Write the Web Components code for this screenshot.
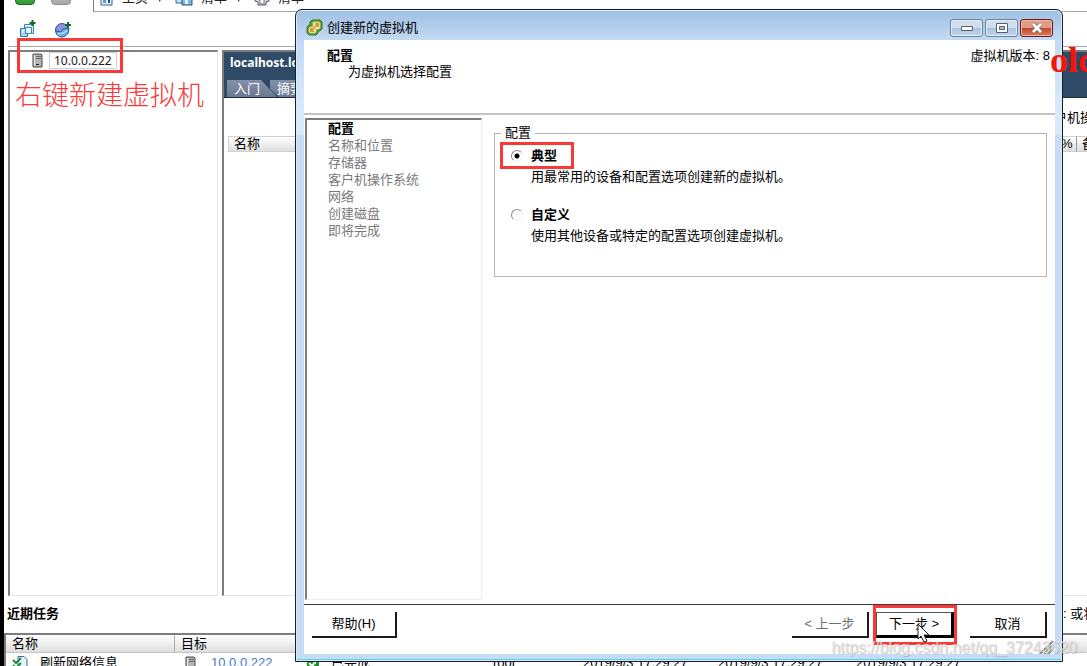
<!DOCTYPE html>
<html lang="zh-CN">
<head>
<meta charset="UTF-8">
<meta name="viewport" content="width=device-width, initial-scale=1.0">
<title>vSphere Client</title>
<style>
    :root {
        --font-ui: "Liberation Sans", "Noto Sans CJK SC", sans-serif;
        --font-tahoma: "Noto Sans", "Noto Sans CJK SC", sans-serif;
        --mark: #fb3838;
        --line: #a8a8a8;
        --edge: #7d7d7d;
        --navy: #2f4a66;
        --frame: #c6dcf5;
    }

    body {
        margin: 0;
        height: 100vh;
        overflow: hidden;
        position: relative;
        background: #fff;
        color: #000;
        font: 13px/16px var(--font-ui);
    }
</style>
</head>
<body>
    <vsphere-shell>
        <nav-bar slot="nav"></nav-bar>
        <tool-bar slot="tools"></tool-bar>
        <inventory-tree slot="tree"></inventory-tree>
        <host-panel slot="host"></host-panel>
        <task-list slot="tasks"></task-list>
    </vsphere-shell>

    <wizard-window>
        <span slot="title">创建新的虚拟机</span>
        <wizard-header slot="header">
            <span slot="heading">配置</span>
            <span slot="summary">为虚拟机选择配置</span>
            <span slot="version">虚拟机版本: 8</span>
        </wizard-header>
        <wizard-steps slot="steps"></wizard-steps>
        <config-options slot="page"></config-options>
        <wizard-footer slot="footer"></wizard-footer>
    </wizard-window>

    <page-notes></page-notes>

<script>
const serverIcon = `
    <svg width="11" height="15" viewBox="0 0 11 15" aria-hidden="true">
        <path d="M1 1h8l1 1v12H1z" fill="#b4b4b4" stroke="#4a4a4a"/>
        <path d="M2.500 2v11" stroke="#ededed"/>
        <path d="M4 3.500h5M4 5.500h5" stroke="#6c6c6c"/>
        <path d="M4 11.500h3" stroke="#222"/>
    </svg>`;

class VsphereShell extends HTMLElement {
    constructor() {
        super();
        this.attachShadow({ mode: 'open' });
    }

    connectedCallback() {
        this.shadowRoot.innerHTML = `
            <style>
                :host {
                    display: flex;
                    flex-direction: column;
                    height: 100%;
                    box-sizing: border-box;
                    border-left: 4px solid #000;
                    overflow: hidden;
                }

                .main {
                    flex: 1;
                    min-height: 0;
                    display: grid;
                    grid-template-columns: 210px 1fr;
                    gap: 4px;
                    padding-left: 4px;
                }

                .tasks {
                    flex: 0 0 70px;
                    overflow: hidden;
                }
            </style>
            <slot name="nav"></slot>
            <slot name="tools"></slot>
            <div class="main">
                <slot name="tree"></slot>
                <slot name="host"></slot>
            </div>
            <div class="tasks"><slot name="tasks"></slot></div>
        `;
    }
}

class NavBar extends HTMLElement {
    constructor() {
        super();
        this.attachShadow({ mode: 'open' });
    }

    connectedCallback() {
        this.shadowRoot.innerHTML = `
            <style>
                :host {
                    display: flex;
                    align-items: flex-end;
                    height: 12px;
                }

                .history {
                    display: flex;
                    gap: 16px;
                    width: 78px;
                    padding: 0 0 7px 11px;
                    flex: none;
                }

                .history button {
                    width: 20px;
                    height: 20px;
                    padding: 0;
                    border: 1px solid #1c6b28;
                    border-radius: 4px;
                    background: linear-gradient(#6cc46c, #2f9a35);
                }

                .history button:last-child {
                    border-color: #8f8f8f;
                    background: linear-gradient(#dcdcdc, #a6a6a6);
                }

                .path {
                    flex: 1;
                    height: 11px;
                    display: flex;
                    align-items: flex-end;
                    border-left: 1px solid var(--edge);
                    border-bottom: 1px solid var(--line);
                }

                .crumbs {
                    display: flex;
                    align-items: center;
                    gap: 11px;
                    height: 16px;
                    padding: 0 0 5px 6px;
                }

                a {
                    display: flex;
                    align-items: center;
                    gap: 8px;
                    color: #222;
                    text-decoration: none;
                }

                svg {
                    display: block;
                }
            </style>
            <div class="history">
                <button aria-label="后退"></button>
                <button aria-label="前进" disabled></button>
            </div>
            <div class="path">
                <nav class="crumbs">
                    <a href="#home">
                        <svg width="14" height="16" viewBox="0 0 14 16"><path d="M1 1h11v14H1z" fill="#e8f2fb" stroke="#34618f"/><path d="M3 8h3v5H3z" fill="#5d9bd0"/><path d="M8 7h2v6H8z" fill="#26517b"/></svg>
                        主页
                    </a>
                    <svg width="5" height="8" viewBox="0 0 5 8"><path d="M0 0l4 4-4 4z" fill="#2a5b92"/></svg>
                    <a href="#inventory">
                        <svg width="18" height="16" viewBox="0 0 18 16"><path d="M1 3h8v10H1z" fill="#bfe0f6" stroke="#2b6aa1"/><path d="M7 5h10v10H7z" fill="#7fb6e4" stroke="#24507c"/><path d="M10 7h3v7h-3z" fill="#e9f5fd"/></svg>
                        清单
                    </a>
                    <svg width="5" height="8" viewBox="0 0 5 8"><path d="M0 0l4 4-4 4z" fill="#2a5b92"/></svg>
                    <a href="#list">
                        <svg width="16" height="16" viewBox="0 0 16 16"><path d="M1 3h14v8l-3 1v3H4v-3l-3-1z" fill="#d5d5dd" stroke="#555563"/><path d="M6 9h4v5H6z" fill="#fff" stroke="#777"/></svg>
                        清单
                    </a>
                </nav>
            </div>
        `;
    }
}

class ToolBar extends HTMLElement {
    constructor() {
        super();
        this.attachShadow({ mode: 'open' });
    }

    connectedCallback() {
        this.shadowRoot.innerHTML = `
            <style>
                :host {
                    display: flex;
                    align-items: center;
                    gap: 17px;
                    height: 34px;
                    margin: 0 0 3px 4px;
                    padding-left: 11px;
                    border-bottom: 1px solid var(--line);
                }

                button {
                    padding: 0;
                    border: 0;
                    background: none;
                }

                svg {
                    display: block;
                }
            </style>
            <button aria-label="新建虚拟机">
                <svg width="18" height="18" viewBox="0 0 18 18">
                    <path d="M5.500 4.500h9v9h-9z" fill="#d5ecf8" stroke="#3a86b4"/>
                    <path d="M1.500 8.500h7v8h-7z" fill="#a9d5ef" stroke="#2878aa"/>
                    <path d="M6.500 7.500h6v6h-6z" fill="#e4f4fc" stroke="#3a86b4"/>
                    <path d="M3 10h3M3 12h2M8 9h3" stroke="#fff"/>
                    <path d="M13.500 0v6M10.500 3h6" stroke="#116b22" stroke-width="2"/>
                </svg>
            </button>
            <button aria-label="新建资源池">
                <svg width="18" height="18" viewBox="0 0 18 18">
                    <circle cx="8" cy="10" r="6.500" fill="#8e93dd" stroke="#3c4796"/>
                    <path d="M2 11l5 1 2-3 6-1c0 5-3 9-7 9-3 0-6-2-6-6z" fill="#67b5ee" stroke="#23599c"/>
                    <path d="M4 14l5-1 4-2" stroke="#d6efff" fill="none"/>
                    <path d="M14 2v6M11 5h6" stroke="#116b22" stroke-width="2"/>
                </svg>
            </button>
        `;
    }
}

class InventoryTree extends HTMLElement {
    constructor() {
        super();
        this.attachShadow({ mode: 'open' });
    }

    connectedCallback() {
        this.shadowRoot.innerHTML = `
            <style>
                :host {
                    display: block;
                    border: 1px solid #e4e4e4;
                    border-top: 2px solid var(--edge);
                    border-left: 2px solid var(--edge);
                }

                .node {
                    display: flex;
                    align-items: center;
                    gap: 6px;
                    padding: 0 0 0 22px;
                }

                button {
                    height: 17px;
                    padding: 0 4px;
                    border: 1px solid #c3d3e2;
                    background: #fff;
                    color: #222;
                    font: 12px/15px var(--font-tahoma);
                }

                svg {
                    display: block;
                }
            </style>
            <div class="node">${serverIcon}<button>10.0.0.222</button></div>
        `;
    }
}

class HostPanel extends HTMLElement {
    constructor() {
        super();
        this.attachShadow({ mode: 'open' });
    }

    connectedCallback() {
        this.shadowRoot.innerHTML = `
            <style>
                :host {
                    display: block;
                    min-width: 0;
                    overflow: hidden;
                    border-top: 2px solid var(--edge);
                    border-left: 2px solid var(--edge);
                    border-bottom: 1px solid #e4e4e4;
                }

                header {
                    display: flex;
                    flex-direction: column;
                    justify-content: space-between;
                    height: 45px;
                    background: var(--navy);
                    border-bottom: 1px solid #1d2c3c;
                }

                h1 {
                    width: 66px;
                    margin: 3px 0 0 6px;
                    overflow: hidden;
                    white-space: nowrap;
                    color: #fff;
                    font: bold 12px/16px var(--font-tahoma);
                }

                .tabs {
                    display: flex;
                    padding-left: 3px;
                }

                .tabs button {
                    width: 50px;
                    height: 17px;
                    padding: 0 0 0 7px;
                    border: 0;
                    overflow: hidden;
                    white-space: nowrap;
                    text-align: left;
                    background: linear-gradient(#8290a8, #6a7892);
                    color: #fff;
                    font: 13px/17px var(--font-ui);
                    clip-path: polygon(0 0, 34px 0, 100% 100%, 0 100%);
                }

                .tabs button + button {
                    width: 27px;
                    margin-left: -7px;
                    clip-path: polygon(0 0, 100% 0, 100% 100%, 9px 100%, 0 9px);
                }

                .filter {
                    display: flex;
                    justify-content: flex-end;
                    padding: 12px 0 10px;
                }

                .filter span {
                    width: 33px;
                    overflow: hidden;
                    white-space: nowrap;
                }

                table {
                    width: calc(100% - 4px);
                    margin-left: 4px;
                    border-spacing: 0;
                    table-layout: fixed;
                }

                th {
                    height: 14px;
                    padding: 0 0 0 5px;
                    border: 1px solid #d0d0d0;
                    border-right: 0;
                    background: linear-gradient(#fff, #dedede);
                    overflow: hidden;
                    white-space: nowrap;
                    text-align: left;
                    font-weight: normal;
                    line-height: 14px;
                }

                th:nth-child(2) {
                    width: 15px;
                    padding: 0;
                    border-left: 0;
                }

                th:last-child {
                    width: 5px;
                    border-left-color: #9a9a9a;
                }
            </style>
            <header>
                <h1>localhost.lo</h1>
                <div class="tabs">
                    <button>入门</button>
                    <button>摘要</button>
                </div>
            </header>
            <div class="filter"><span>户机操</span></div>
            <table>
                <tr><th>名称</th><th>%</th><th>备</th></tr>
            </table>
        `;
    }
}

class TaskList extends HTMLElement {
    constructor() {
        super();
        this.attachShadow({ mode: 'open' });
    }

    connectedCallback() {
        this.shadowRoot.innerHTML = `
            <style>
                :host {
                    display: block;
                }

                .caption {
                    display: flex;
                    justify-content: space-between;
                    padding: 10px 0 11px 3px;
                }

                h2 {
                    margin: 0;
                    font-size: 13px;
                }

                .caption span {
                    width: 24px;
                    overflow: hidden;
                    white-space: nowrap;
                }

                table {
                    width: 100%;
                    border-top: 2px solid var(--edge);
                    border-left: 2px solid var(--edge);
                    border-spacing: 0;
                    table-layout: fixed;
                }

                th {
                    height: 17px;
                    padding: 0 0 0 6px;
                    border-right: 1px solid #a9a9a9;
                    border-bottom: 1px solid #c4c4c4;
                    background: linear-gradient(#fff, #dedede);
                    text-align: left;
                    font-weight: normal;
                }

                th:nth-child(n + 3) {
                    border-right-color: transparent;
                }

                td {
                    height: 20px;
                    padding: 0 0 0 6px;
                    white-space: nowrap;
                }

                .item {
                    display: flex;
                    align-items: center;
                    gap: 12px;
                }

                .item.target {
                    gap: 15px;
                    padding-left: 4px;
                }

                a {
                    color: #4a7ac8;
                    text-decoration: none;
                }
            </style>
            <div class="caption"><h2>近期任务</h2><span>: 或将</span></div>
            <table>
                <colgroup>
                    <col style="width: 169px">
                    <col style="width: 126px">
                    <col style="width: 186px">
                    <col style="width: 90px">
                    <col style="width: 135px">
                    <col style="width: 138px">
                    <col>
                </colgroup>
                <tr><th>名称</th><th>目标</th><th></th><th></th><th></th><th></th><th></th></tr>
                <tr>
                    <td>
                        <div class="item">
                            <svg width="16" height="16" viewBox="0 0 16 16"><path d="M6 1.500h6l3 3V15H6z" fill="#e8f3fb" stroke="#3a6d9b"/><path d="M1 5l3 3 5-5M1 10l3 3 5-5" fill="none" stroke="#1f8a3b" stroke-width="2"/></svg>
                            刷新网络信息
                        </div>
                    </td>
                    <td><div class="item target">${serverIcon}<a href="#host">10.0.0.222</a></div></td>
                    <td>
                        <div class="item">
                            <svg width="12" height="14" viewBox="0 0 12 14"><path d="M0 1h12v12H0z" fill="#1f8f34"/><path d="M2 7l3 3 5-6" fill="none" stroke="#fff" stroke-width="2"/></svg>
                            已完成
                        </div>
                    </td>
                    <td>root</td>
                    <td>2019/9/3 17:29:27</td>
                    <td>2019/9/3 17:29:27</td>
                    <td>2019/9/3 17:29:27</td>
                </tr>
            </table>
        `;
    }
}

class WizardWindow extends HTMLElement {
    constructor() {
        super();
        this.attachShadow({ mode: 'open' });
    }

    connectedCallback() {
        this.shadowRoot.innerHTML = `
            <style>
                /* floating window over the client */
                :host {
                    position: absolute;
                    inset: 9px 24px 4px 295px;
                    box-sizing: border-box;
                    display: flex;
                    flex-direction: column;
                    padding: 0 7px 7px 8px;
                    border: 1px solid #16202c;
                    border-radius: 7px 7px 0 0;
                    background: linear-gradient(#9fbfe2, #c3daf3 30px, #d9eafa 100px, #d9eafa 124px, var(--frame) 126px);
                    box-shadow: inset 0 0 0 1px #d6ebfb, inset 0 -2px 0 #5fd0ea;
                }

                .titlebar {
                    flex: none;
                    display: flex;
                    align-items: center;
                    gap: 4px;
                    height: 30px;
                    padding: 0 2px;
                }

                .title {
                    flex: 1;
                    padding-top: 6px;
                }

                .icon {
                    padding-top: 4px;
                }

                .controls {
                    display: flex;
                    gap: 2px;
                    padding-top: 6px;
                }

                .controls button {
                    display: flex;
                    align-items: center;
                    justify-content: center;
                    width: 33px;
                    height: 18px;
                    padding: 0;
                    border: 1px solid #6a82a0;
                    border-radius: 3px;
                    background: linear-gradient(#cfdff0 50%, #a9c2de 50%, #c1d7ee);
                    box-shadow: inset 0 0 0 1px #e4effa;
                }

                .controls .close {
                    border-color: #61201a;
                    background: linear-gradient(#e39b87 50%, #c0452c 50%, #d87a5c);
                    box-shadow: inset 0 0 0 1px #efb8a8;
                }

                svg {
                    display: block;
                }

                .content {
                    flex: 1;
                    min-height: 0;
                    display: flex;
                    flex-direction: column;
                    background: #fff;
                    position: relative;
                }

                .body {
                    flex: 1;
                    min-height: 0;
                    display: grid;
                    grid-template-columns: 177px 1fr;
                    gap: 12px;
                    padding: 3px 8px 4px 1px;
                }

                .grip {
                    position: absolute;
                    right: 1px;
                    bottom: 0;
                }
            </style>
            <div class="titlebar">
                <svg class="icon" width="17" height="17" viewBox="0 0 17 17">
                    <path d="M6 1h8l2 2v7l-2 2h-2v2l-2 2H3l-2-2V8l2-2h1V3z" fill="#5d9b35" stroke="#3f7224"/>
                    <path d="M7 3h6l1 1v5l-1 1h-3v3l-1 1H4l-1-1V9l1-1h3z" fill="#f1f7e4" stroke="#a9cf70"/>
                    <path d="M4.500 12.500v-3h3v3zM9.500 7.500v-3h3v3z" fill="#e9a22c" stroke="#d98a1c"/>
                    <path d="M6 11l5-5" stroke="#e9a22c" stroke-width="2"/>
                </svg>
                <div class="title"><slot name="title"></slot></div>
                <div class="controls">
                    <button aria-label="最小化"><svg width="12" height="6" viewBox="0 0 12 6"><path d="M.5 1.500h11v4H.5z" fill="#fff" stroke="#59616d"/></svg></button>
                    <button aria-label="最大化"><svg width="12" height="10" viewBox="0 0 12 10"><path d="M.5.500h11v9H.5z" fill="#fff" stroke="#59616d"/><path d="M3.500 3.500h5v3h-5z" fill="#a9c2de" stroke="#59616d"/></svg></button>
                    <button class="close" aria-label="关闭"><svg width="12" height="10" viewBox="0 0 12 10"><path d="M2 1l8 8M10 1L2 9" stroke="#59433f" stroke-width="4"/><path d="M2 1l8 8M10 1L2 9" stroke="#fff" stroke-width="3"/></svg></button>
                </div>
            </div>
            <div class="content">
                <slot name="header"></slot>
                <div class="body">
                    <slot name="steps"></slot>
                    <slot name="page"></slot>
                </div>
                <slot name="footer"></slot>
                <svg class="grip" width="15" height="14" viewBox="0 0 15 14"><path d="M1 14L14 1M5 14l9-9M9 14l5-5" stroke="#8c8c8c" stroke-width="2"/></svg>
            </div>
        `;
    }
}

class WizardHeader extends HTMLElement {
    constructor() {
        super();
        this.attachShadow({ mode: 'open' });
    }

    connectedCallback() {
        this.shadowRoot.innerHTML = `
            <style>
                :host {
                    flex: none;
                    display: flex;
                    justify-content: space-between;
                    box-sizing: border-box;
                    height: 75px;
                    padding: 8px 5px 0 23px;
                    border-bottom: 2px solid #c4c4c4;
                }

                h2, p {
                    margin: 0;
                    font-size: 13px;
                    line-height: 16px;
                }

                p {
                    padding-left: 21px;
                }
            </style>
            <div>
                <h2><slot name="heading"></slot></h2>
                <p><slot name="summary"></slot></p>
            </div>
            <slot name="version"></slot>
        `;
    }
}

class WizardSteps extends HTMLElement {
    constructor() {
        super();
        this.attachShadow({ mode: 'open' });
        this.steps = ['配置', '名称和位置', '存储器', '客户机操作系统', '网络', '创建磁盘', '即将完成'];
    }

    connectedCallback() {
        this.shadowRoot.innerHTML = `
            <style>
                :host {
                    display: block;
                    border: 1px solid #ededed;
                    border-top: 2px solid var(--edge);
                    border-left: 2px solid var(--edge);
                }

                ol {
                    margin: 0;
                    padding: 0 0 0 21px;
                    list-style: none;
                    line-height: 17px;
                    color: #7a7a7a;
                }

                .current {
                    color: #000;
                    font-weight: bold;
                }
            </style>
            <ol>
                ${this.steps.map((step, i) => `<li class="${i === 0 ? 'current' : ''}">${step}</li>`).join('')}
            </ol>
        `;
    }
}

class ConfigOptions extends HTMLElement {
    constructor() {
        super();
        this.attachShadow({ mode: 'open' });
    }

    connectedCallback() {
        this.shadowRoot.innerHTML = `
            <style>
                :host {
                    display: block;
                    padding-top: 7px;
                }

                fieldset {
                    box-sizing: border-box;
                    min-height: 152px;
                    margin: 0;
                    padding: 6px 0 0 16px;
                    border: 1px solid #b4b4b4;
                }

                legend {
                    margin-left: -10px;
                    padding: 0 4px;
                }

                .option {
                    display: grid;
                    grid-template-columns: 12px 1fr;
                    column-gap: 8px;
                    row-gap: 5px;
                    align-items: center;
                    margin-bottom: 21px;
                }

                label {
                    justify-self: start;
                    font-weight: bold;
                    line-height: 17px;
                }

                p {
                    grid-column: 2;
                    margin: 0;
                }

                input {
                    appearance: none;
                    width: 12px;
                    height: 12px;
                    margin: 0;
                    border: 1px solid #8a8a8a;
                    border-right-color: #efefef;
                    border-bottom-color: #efefef;
                    border-radius: 50%;
                    background: #fff;
                }

                input:checked {
                    background: radial-gradient(circle, #000 2px, #fff 3px);
                }

                .option.marked {
                    position: relative;
                }

                .option.marked::before {
                    content: "";
                    position: absolute;
                    left: -11px;
                    top: -5px;
                    width: 68px;
                    height: 21px;
                    border: 3px solid var(--mark);
                    pointer-events: none;
                }
            </style>
            <fieldset>
                <legend>配置</legend>
                <div class="option marked">
                    <input type="radio" name="mode" id="typical" checked>
                    <label for="typical">典型</label>
                    <p>用最常用的设备和配置选项创建新的虚拟机。</p>
                </div>
                <div class="option">
                    <input type="radio" name="mode" id="custom">
                    <label for="custom">自定义</label>
                    <p>使用其他设备或特定的配置选项创建虚拟机。</p>
                </div>
            </fieldset>
        `;
    }
}

class WizardFooter extends HTMLElement {
    constructor() {
        super();
        this.attachShadow({ mode: 'open' });
    }

    connectedCallback() {
        this.shadowRoot.innerHTML = `
            <style>
                :host {
                    flex: none;
                    display: flex;
                    align-items: flex-start;
                    box-sizing: border-box;
                    height: 50px;
                    padding: 7px 8px 0 8px;
                    border-top: 1px solid #3a3a3a;
                }

                button {
                    width: 77px;
                    height: 26px;
                    padding: 0;
                    border: 0 solid #1a1a1a;
                    border-right-width: 2px;
                    border-bottom-width: 2px;
                    background: #fff;
                    color: #000;
                    font: 13px/16px var(--font-ui);
                }

                .help {
                    width: 85px;
                    margin-right: auto;
                }

                .back {
                    color: #6e6e6e;
                }

                .next {
                    width: 78px;
                    border: 1px solid #555;
                    border-right: 3px solid #000;
                    border-bottom: 3px solid #000;
                }

                .marked {
                    position: relative;
                    margin: 0 16px 0 7px;
                }

                .marked::after {
                    content: "";
                    position: absolute;
                    inset: -7px -3px;
                    border: 3px solid var(--mark);
                    pointer-events: none;
                }
            </style>
            <button class="help">帮助(H)</button>
            <button class="back">&lt; 上一步</button>
            <div class="marked"><button class="next">下一步 &gt;</button></div>
            <button>取消</button>
        `;
    }
}

class PageNotes extends HTMLElement {
    constructor() {
        super();
        this.attachShadow({ mode: 'open' });
    }

    connectedCallback() {
        this.shadowRoot.innerHTML = `
            <style>
                /* annotations drawn over everything else */
                :host {
                    position: absolute;
                    inset: 0;
                    overflow: hidden;
                    pointer-events: none;
                }

                .box {
                    position: absolute;
                    left: 17px;
                    top: 38px;
                    width: 100px;
                    height: 29px;
                    border: 3px solid var(--mark);
                }

                .hint {
                    position: absolute;
                    left: 15px;
                    top: 80px;
                    color: var(--mark);
                    font-size: 27px;
                    line-height: 32px;
                    font-weight: 300;
                }

                .stamp {
                    position: absolute;
                    left: calc(100% - 37px);
                    top: 40px;
                    width: 37px;
                    overflow: hidden;
                    color: #f5140a;
                    font: bold 36px/40px "Liberation Serif", serif;
                }

                .watermark {
                    position: absolute;
                    right: 10px;
                    bottom: 9px;
                    color: rgba(225, 225, 225, 0.9);
                    font-size: 16px;
                    line-height: 18px;
                    text-shadow: 1px 1px 1px rgba(120, 120, 120, 0.4);
                }

                .pointer {
                    position: absolute;
                    right: 157px;
                    bottom: 23px;
                }
            </style>
            <div class="box"></div>
            <div class="hint">右键新建虚拟机</div>
            <div class="stamp">olc</div>
            <svg class="pointer" width="13" height="20" viewBox="0 0 13 20"><path d="M1 1v15l3-3 3 6 3-1-3-6h5z" fill="#fff" stroke="#222"/></svg>
            <div class="watermark">https://blog.csdn.net/qq_37243620</div>
        `;
    }
}

customElements.define('vsphere-shell', VsphereShell);
customElements.define('nav-bar', NavBar);
customElements.define('tool-bar', ToolBar);
customElements.define('inventory-tree', InventoryTree);
customElements.define('host-panel', HostPanel);
customElements.define('task-list', TaskList);
customElements.define('wizard-window', WizardWindow);
customElements.define('wizard-header', WizardHeader);
customElements.define('wizard-steps', WizardSteps);
customElements.define('config-options', ConfigOptions);
customElements.define('wizard-footer', WizardFooter);
customElements.define('page-notes', PageNotes);
</script>
</body>
</html>
